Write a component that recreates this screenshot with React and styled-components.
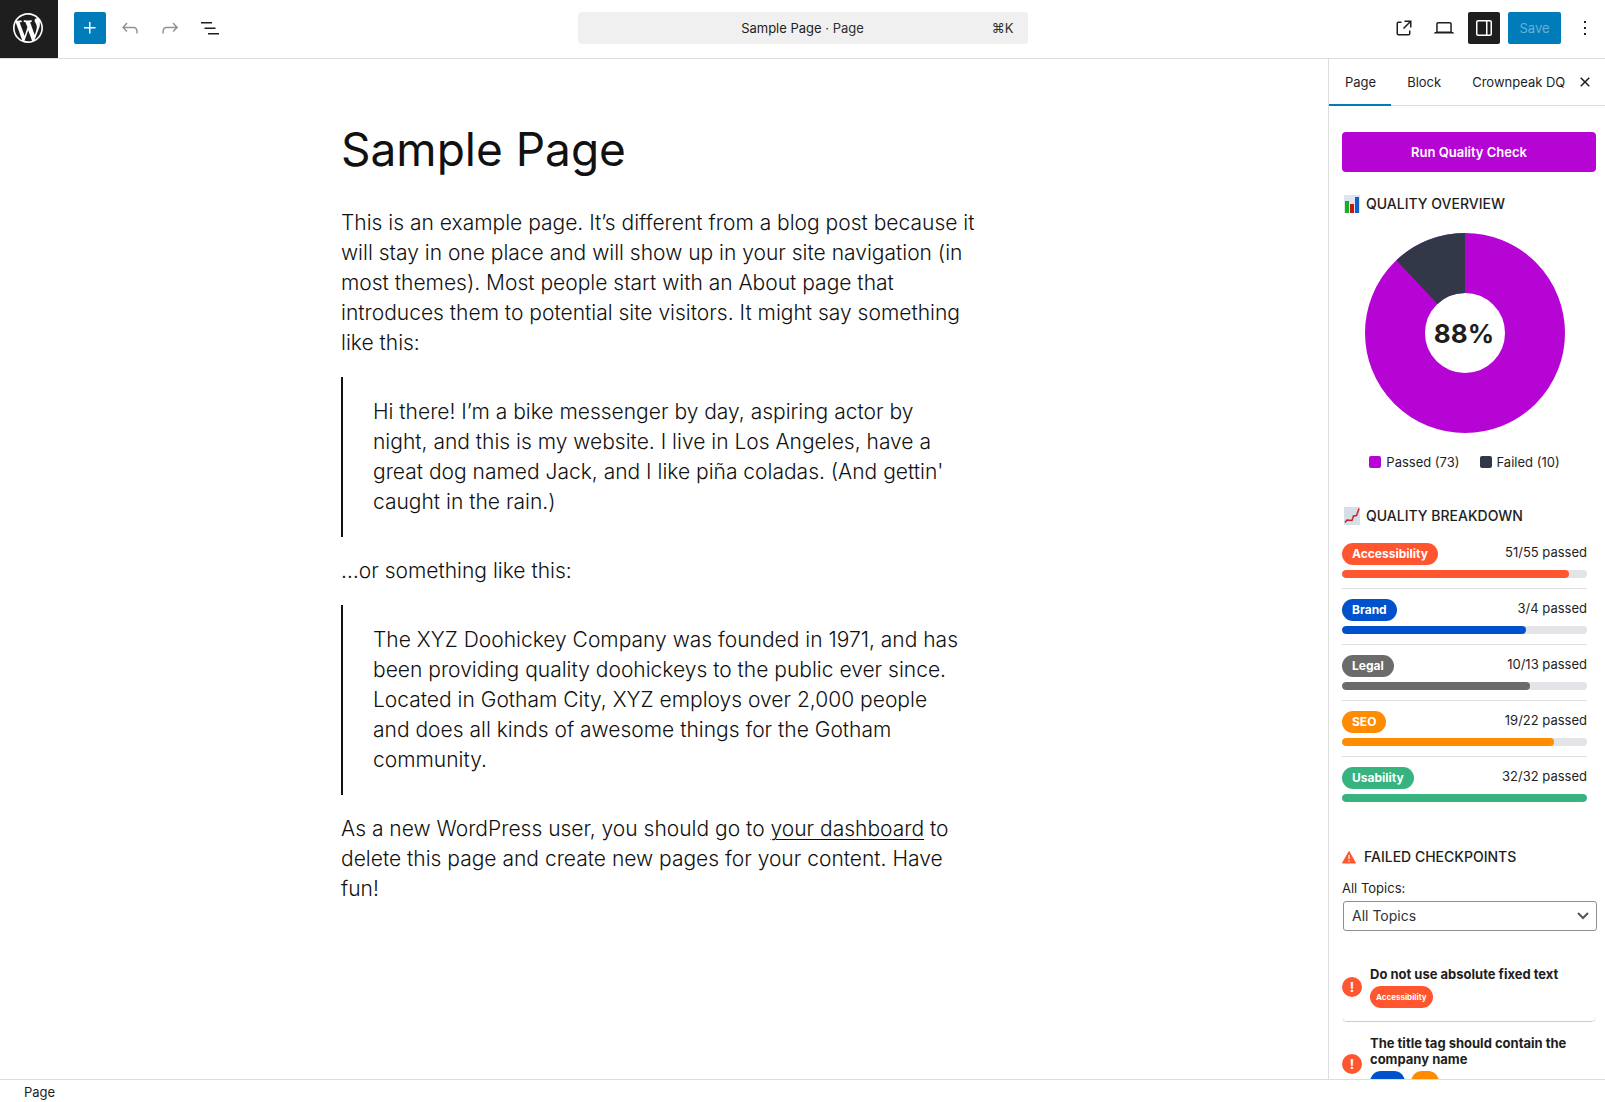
import React from "react";
import styled, { createGlobalStyle } from "styled-components";

const GlobalStyle = createGlobalStyle`
  *, *::before, *::after { box-sizing: border-box; }
  body {
    margin: 0;
    background: #fff;
    color: #1e1e1e;
    font-family: Inter, "Liberation Sans", sans-serif;
    font-size: 13px;
    line-height: 20px;
  }
  button, select { font: inherit; }
  h1, h2, h3, p, blockquote, ul { margin: 0; padding: 0; }
`;

const Shell = styled.div`
  display: flex;
  flex-direction: column;
  height: 100vh;
  overflow: hidden;
`;

const Header = styled.header`
  display: grid;
  grid-template-columns: 1fr minmax(0, 450px) 1fr;
  align-items: center;
  flex: none;
  padding-bottom: 2px;
  border-bottom: 1px solid #ddd;
`;

const HeaderStart = styled.div`
  display: flex;
  align-items: center;
  gap: 8px;
`;

const HeaderEnd = styled.div`
  display: flex;
  align-items: center;
  justify-content: flex-end;
  gap: 8px;
  padding-right: 4px;
`;

const HomeLink = styled.a`
  display: flex;
  align-items: center;
  width: 58px;
  height: 58px;
  margin: 0 8px -2px 0;
  padding: 0 0 2px 10px;
  background: #1e1e1e;
  color: #fff;
`;

const IconButton = styled.button`
  display: flex;
  align-items: center;
  justify-content: center;
  width: 32px;
  height: 32px;
  padding: 0;
  border: 0;
  border-radius: 2px;
  background: ${(p) => p.$bg || "transparent"};
  color: ${(p) => p.$fg || "#1e1e1e"};
`;

const SaveButton = styled.button`
  min-width: 53px;
  height: 32px;
  padding: 0 10px;
  border: 0;
  border-radius: 2px;
  background: #007cba;
  color: #66b0d6;
`;

const CommandBar = styled.button`
  display: grid;
  grid-template-columns: 1fr auto 1fr;
  align-items: center;
  height: 32px;
  padding: 0 14px;
  border: 0;
  border-radius: 4px;
  background: #f0f0f0;
  color: #1e1e1e;
`;

const CommandTitle = styled.span`
  grid-column: 2;
`;

const Shortcut = styled.span`
  justify-self: end;
  color: #2f2f2f;
`;

const Muted = styled.span`
  color: #2f2f2f;
`;

const Main = styled.div`
  display: flex;
  flex: 1;
  min-height: 0;
`;

const Canvas = styled.main`
  flex: 1;
  min-width: 0;
  overflow: hidden;
  padding: 62px 40px 0;
`;

const Article = styled.article`
  display: flex;
  flex-direction: column;
  gap: 19px;
  max-width: 646px;
  margin: 0 auto;
  color: #111;
  font-size: 21px;
  font-weight: 300;
  line-height: 30px;
`;

const Title = styled.h1`
  padding-bottom: 12px;
  font-size: 46px;
  font-weight: 400;
  line-height: 56px;
`;

const Quote = styled.blockquote`
  padding: 20px 20px 20px 30px;
  border-left: 2px solid #111;
`;

const InlineLink = styled.a`
  color: inherit;
  text-decoration: underline;
  text-decoration-thickness: 1px;
  text-underline-offset: 3px;
`;

const Sidebar = styled.aside`
  display: flex;
  flex-direction: column;
  flex: none;
  width: 277px;
  border-left: 1px solid #ddd;
  overflow: hidden;
`;

const TabBar = styled.div`
  display: flex;
  flex: none;
  height: 47px;
  border-bottom: 1px solid #ddd;
`;

const TabList = styled.div`
  display: flex;
  flex: 1;
  min-width: 0;
  margin-bottom: -1px;
  overflow: hidden;
`;

const Tab = styled.button`
  flex: none;
  padding: 0 15px 0 16px;
  border: 0;
  border-bottom: 2px solid ${(p) => (p.$active ? "#007cba" : "transparent")};
  background: none;
  color: #1e1e1e;
  white-space: nowrap;
`;

const CloseSlot = styled.div`
  display: flex;
  align-items: center;
  padding: 0 4px;
`;

const Panel = styled.div`
  flex: 1;
  min-height: 0;
  overflow: hidden;
  padding: 26px 9px 0 13px;
`;

const RunButton = styled.button`
  display: block;
  width: 100%;
  height: 40px;
  border: 0;
  border-radius: 4px;
  background: #b604d4;
  color: #fff;
  font-weight: 600;
`;

const SectionTitle = styled.h2`
  display: flex;
  align-items: center;
  gap: 6px;
  font-size: 14px;
  font-weight: 500;
  line-height: 20px;
  text-transform: uppercase;
`;

const Overview = styled.section`
  padding: 22px 9px 0 0;
`;

const Chart = styled.div`
  display: flex;
  justify-content: center;
  padding-top: 19px;
`;

const ChartLabel = styled.text`
  fill: #1e1e1e;
  font-size: 26px;
  font-weight: 700;
  text-anchor: middle;
`;

const Legend = styled.ul`
  display: flex;
  justify-content: center;
  gap: 20px;
  padding-top: 19px;
  list-style: none;
`;

const LegendItem = styled.li`
  display: flex;
  align-items: center;
  gap: 5px;
`;

const Swatch = styled.span`
  width: 12px;
  height: 12px;
  border-radius: 2px;
  background: ${(p) => p.$color};
`;

const Breakdown = styled.section`
  padding: 34px 9px 0 0;
`;

const TopicList = styled.ul`
  padding-top: 17px;
  list-style: none;
`;

const TopicRow = styled.li`
  & + & {
    margin-top: 10px;
    padding-top: 10px;
    border-top: 1px solid #e0e0e0;
  }
`;

const TopicHead = styled.div`
  display: flex;
  justify-content: space-between;
  height: 22px;
  margin-bottom: 5px;
  line-height: 18px;
`;

const Pill = styled.span`
  flex: none;
  padding: 0 ${(p) => (p.$small ? 6 : 10)}px;
  border-radius: 11px;
  background: ${(p) => p.$color};
  color: #fff;
  font-size: ${(p) => (p.$small ? 8 : 12)}px;
  font-weight: 700;
  line-height: 22px;
`;

const Track = styled.div`
  height: 8px;
  border-radius: 4px;
  background: #e2e4e7;
  overflow: hidden;
`;

const Fill = styled.div`
  height: 100%;
  border-radius: 4px;
  background: ${(p) => p.$color};
`;

const Failed = styled.section`
  padding-top: 45px;
`;

const FilterLabel = styled.label`
  display: block;
  padding: 11px 0 3px;
`;

const SelectWrap = styled.div`
  display: grid;
  align-items: center;
  margin: 0 -1px 0 1px;
  & > * { grid-area: 1 / 1; }
  & > svg { justify-self: end; margin-right: 8px; pointer-events: none; }
`;

const Select = styled.select`
  appearance: none;
  width: 100%;
  height: 30px;
  padding: 0 24px 0 8px;
  border: 1px solid #8c8f94;
  border-radius: 3px;
  background: #fff;
  color: #2c3338;
  font-size: 14px;
`;

const Checkpoints = styled.ul`
  display: flex;
  flex-direction: column;
  gap: 13px;
  padding-top: 35px;
  list-style: none;
`;

const Checkpoint = styled.li`
  display: flex;
  align-items: center;
  gap: 8px;
  padding: 0 8px 13px 0;
  border-bottom: 1px solid #ccc;
  border-radius: 5px;
`;

const Alert = styled.span`
  flex: none;
  width: 20px;
  height: 20px;
  border-radius: 50%;
  background: #ff5630;
  color: #fff;
  font-weight: 700;
  line-height: 20px;
  text-align: center;
`;

const CheckTitle = styled.h3`
  font-size: 13px;
  font-weight: 700;
  line-height: 16px;
`;

const PillRow = styled.div`
  display: flex;
  gap: 6px;
  padding-top: 4px;
`;

const Footer = styled.footer`
  flex: none;
  height: 23px;
  padding: 2px 24px 0;
  border-top: 1px solid #ddd;
  line-height: 20px;
`;

const ICONS = {
  plus: "M11 12.5V17.5H12.5V12.5H17.5V11H12.5V6H11V11H6V12.5H11Z",
  undo: "M18.3 11.7c-.6-.6-1.4-.9-2.3-.9H6.7l2.9-3.3-1.1-1-4.5 5L8.5 16l1-1-2.7-2.7H16c.5 0 .9.2 1.3.5 1 1 1 3.4 1 4.5v.3h1.5v-.2c0-1.5 0-4.3-1.5-5.7z",
  redo: "M15.6 6.5l-1.1 1 2.9 3.3H8c-.9 0-1.7.3-2.3.9-1.4 1.5-1.4 4.2-1.4 5.6v.2h1.5v-.3c0-1.1 0-3.5 1-4.5.3-.3.7-.5 1.3-.5h9.2L14.5 15l1.1 1.1 4.6-4.6-4.6-5z",
  list: "M3 6h11v1.5H3V6Zm3.5 5.5h11V13h-11v-1.5ZM21 17H10v1.5h11V17Z",
  external: "M19.5 4.5h-7V6h4.44l-5.97 5.97 1.06 1.06L18 7.06v4.44h1.5v-7Zm-13 1a2 2 0 0 0-2 2v10a2 2 0 0 0 2 2h10a2 2 0 0 0 2-2v-3H17v3a.5.5 0 0 1-.5.5h-10a.5.5 0 0 1-.5-.5v-10a.5.5 0 0 1 .5-.5h3V5.5h-3Z",
  desktop: "M20.5 16h-.7V8c0-1.1-.9-2-2-2H6.2c-1.1 0-2 .9-2 2v8h-.7c-.8 0-1.5.7-1.5 1.5h20c0-.8-.7-1.5-1.5-1.5zM5.7 8c0-.3.2-.5.5-.5h11.6c.3 0 .5.2.5.5v7.6H5.7V8z",
  drawer: "M18 4H6c-1.1 0-2 .9-2 2v12c0 1.1.9 2 2 2h12c1.1 0 2-.9 2-2V6c0-1.1-.9-2-2-2zm-4 14.5H6c-.3 0-.5-.2-.5-.5V6c0-.3.2-.5.5-.5h8v13zm4.5-.5c0 .3-.2.5-.5.5h-2.5v-13H18c.3 0 .5.2.5.5v12z",
  more: "M13 19h-2v-2h2v2zm0-6h-2v-2h2v2zm0-6h-2V5h2v2z",
  close: "M12 13.06l3.712 3.713 1.061-1.06L13.061 12l3.712-3.712-1.06-1.06L12 10.938 8.288 7.227l-1.061 1.06L10.939 12l-3.712 3.712 1.06 1.061L12 13.061z",
};

const Icon = ({ name }) => (
  <svg width="24" height="24" viewBox="0 0 24 24" fill="currentColor" aria-hidden="true">
    <path d={ICONS[name]} />
  </svg>
);

const WordPressLogo = () => (
  <svg width="36" height="36" viewBox="-2 -2 24 24" fill="currentColor" aria-hidden="true">
    <path d="M20 10c0-5.51-4.49-10-10-10C4.48 0 0 4.49 0 10c0 5.52 4.48 10 10 10 5.51 0 10-4.48 10-10zM7.78 15.37L4.37 6.22c.55-.02 1.17-.08 1.17-.08.5-.06.44-1.13-.06-1.11 0 0-1.45.11-2.37.11-.18 0-.37 0-.58-.01C4.12 2.69 6.87 1.11 10 1.11c2.33 0 4.45.87 6.05 2.34-.68-.11-1.65.39-1.65 1.58 0 .74.45 1.36.9 2.1.35.61.55 1.36.55 2.46 0 1.49-1.4 5-1.4 5l-3.03-8.37c.54-.02.82-.17.82-.17.5-.05.44-1.25-.06-1.22 0 0-1.44.12-2.38.12-.87 0-2.33-.12-2.33-.12-.5-.03-.56 1.2-.06 1.22l.92.08 1.26 3.41zM17.41 10c.24-.64.74-1.87.43-4.25.7 1.29 1.05 2.71 1.05 4.25 0 3.29-1.73 6.24-4.4 7.78.97-2.59 1.94-5.2 2.92-7.78zM6.1 18.09C3.12 16.65 1.11 13.53 1.11 10c0-1.3.23-2.48.72-3.59C3.25 10.3 4.67 14.2 6.1 18.09zm4.03-6.63l2.58 6.98c-.86.29-1.76.45-2.71.45-.79 0-1.57-.11-2.29-.33.81-2.38 1.62-4.74 2.42-7.1z" />
  </svg>
);

const BarChartIcon = () => (
  <svg width="18" height="20" viewBox="0 0 18 20" aria-hidden="true">
    <rect x="2" y="1" width="16" height="18" fill="#dde6f0" />
    <rect x="3" y="7" width="4" height="12" fill="#12b31c" />
    <rect x="8" y="10" width="4" height="9" fill="#c01818" />
    <rect x="13" y="3" width="4" height="16" fill="#1560c4" />
  </svg>
);

const TrendIcon = () => (
  <svg width="18" height="20" viewBox="0 0 18 20" aria-hidden="true">
    <rect x="2" y="1" width="16" height="18" fill="#d8e0e8" />
    <path d="M2 6h16M2 10h16M2 14h16M6 1v18M10 1v18M14 1v18" stroke="#ccd6e0" strokeWidth="0.5" />
    <path d="M3 16.500l2-2.500 5 .500 1.500-4.500 3-.500 2.500-7" fill="none" stroke="#c8242c" strokeWidth="1.500" />
  </svg>
);

const WarningIcon = () => (
  <svg width="16" height="14" viewBox="0 0 16 14" aria-hidden="true">
    <path d="M7 1.500L13.500 13H.5z" fill="#ff5630" stroke="#ff5630" strokeLinejoin="round" />
    <path d="M7 5v4M7 10.500v1.300" stroke="#fff" strokeWidth="1.300" />
  </svg>
);

const PASSED = 73;
const FAILED = 10;

const DonutChart = () => {
  const angle = (PASSED / (PASSED + FAILED)) * 2 * Math.PI;
  const at = (r) => `${100 + r * Math.sin(angle)} ${100 - r * Math.cos(angle)}`;
  return (
    <svg width="200" height="200" viewBox="0 0 200 200" role="img" aria-label="Quality overview">
      <circle cx="100" cy="100" r="70" fill="none" stroke="#b604d4" strokeWidth="60" />
      <path d={`M${at(100)}A100 100 0 0 1 100 0V60A40 40 0 0 0 ${at(40)}Z`} fill="#323848" />
      <ChartLabel x="99" y="110">88%</ChartLabel>
    </svg>
  );
};

const COLORS = {
  Accessibility: "#ff5630",
  Brand: "#0052cc",
  Legal: "#6b6b6b",
  SEO: "#ff8b00",
  Usability: "#36b37e",
};

const TOPICS = [
  { name: "Accessibility", passed: 51, total: 55 },
  { name: "Brand", passed: 3, total: 4 },
  { name: "Legal", passed: 10, total: 13 },
  { name: "SEO", passed: 19, total: 22 },
  { name: "Usability", passed: 32, total: 32 },
];

const FAILURES = [
  { title: "Do not use absolute fixed text", topics: ["Accessibility"] },
  { title: "The title tag should contain the company name", topics: ["Brand", "SEO"] },
];

export default function App() {
  return (
    <Shell>
      <GlobalStyle />
      <Header>
        <HeaderStart>
          <HomeLink href="#" aria-label="View Pages"><WordPressLogo /></HomeLink>
          <IconButton $bg="#007cba" $fg="#fff" aria-label="Block Inserter"><Icon name="plus" /></IconButton>
          <IconButton $fg="#949494" aria-label="Undo"><Icon name="undo" /></IconButton>
          <IconButton $fg="#949494" aria-label="Redo"><Icon name="redo" /></IconButton>
          <IconButton aria-label="Document Overview"><Icon name="list" /></IconButton>
        </HeaderStart>
        <CommandBar>
          <CommandTitle>Sample Page <Muted>· Page</Muted></CommandTitle>
          <Shortcut>⌘K</Shortcut>
        </CommandBar>
        <HeaderEnd>
          <IconButton aria-label="View Page"><Icon name="external" /></IconButton>
          <IconButton aria-label="View"><Icon name="desktop" /></IconButton>
          <IconButton $bg="#1e1e1e" $fg="#fff" aria-label="Settings"><Icon name="drawer" /></IconButton>
          <SaveButton>Save</SaveButton>
          <IconButton aria-label="Options"><Icon name="more" /></IconButton>
        </HeaderEnd>
      </Header>

      <Main>
        <Canvas>
          <Article>
            <Title>Sample Page</Title>
            <p>
              This is an example page. It’s different from a blog post because it will stay in one
              place and will show up in your site navigation (in most themes). Most people start
              with an About page that introduces them to potential site visitors. It might say
              something like this:
            </p>
            <Quote>
              <p>
                Hi there! I’m a bike messenger by day, aspiring actor by night, and this is my
                website. I live in Los Angeles, have a great dog named Jack, and I like piña
                coladas. (And gettin' caught in the rain.)
              </p>
            </Quote>
            <p>…or something like this:</p>
            <Quote>
              <p>
                The XYZ Doohickey Company was founded in 1971, and has been providing quality
                doohickeys to the public ever since. Located in Gotham City, XYZ employs over 2,000
                people<br />
                and does all kinds of awesome things for the Gotham community.
              </p>
            </Quote>
            <p>
              As a new WordPress user, you should go to <InlineLink href="#">your dashboard</InlineLink>{" "}
              to delete this page and create new pages for your content. Have<br />
              fun!
            </p>
          </Article>
        </Canvas>

        <Sidebar>
          <TabBar>
            <TabList role="tablist">
              <Tab role="tab" $active aria-selected="true">Page</Tab>
              <Tab role="tab" aria-selected="false">Block</Tab>
              <Tab role="tab" aria-selected="false">Crownpeak DQM</Tab>
            </TabList>
            <CloseSlot>
              <IconButton aria-label="Close Settings"><Icon name="close" /></IconButton>
            </CloseSlot>
          </TabBar>
          <Panel>
            <RunButton>Run Quality Check</RunButton>

            <Overview>
              <SectionTitle><BarChartIcon />Quality Overview</SectionTitle>
              <Chart><DonutChart /></Chart>
              <Legend>
                <LegendItem><Swatch $color="#b604d4" />Passed ({PASSED})</LegendItem>
                <LegendItem><Swatch $color="#323848" />Failed ({FAILED})</LegendItem>
              </Legend>
            </Overview>

            <Breakdown>
              <SectionTitle><TrendIcon />Quality Breakdown</SectionTitle>
              <TopicList>
                {TOPICS.map((t) => (
                  <TopicRow key={t.name}>
                    <TopicHead>
                      <Pill $color={COLORS[t.name]}>{t.name}</Pill>
                      <span>{t.passed}/{t.total} passed</span>
                    </TopicHead>
                    <Track>
                      <Fill $color={COLORS[t.name]} style={{ width: `${(t.passed / t.total) * 100}%` }} />
                    </Track>
                  </TopicRow>
                ))}
              </TopicList>
            </Breakdown>

            <Failed>
              <SectionTitle><WarningIcon />Failed Checkpoints</SectionTitle>
              <FilterLabel htmlFor="topic-filter">All Topics:</FilterLabel>
              <SelectWrap>
                <Select id="topic-filter" defaultValue="all">
                  <option value="all">All Topics</option>
                  {TOPICS.map((t) => <option key={t.name} value={t.name}>{t.name}</option>)}
                </Select>
                <svg width="12" height="8" viewBox="0 0 12 8" fill="none" stroke="#50575e" strokeWidth="2" aria-hidden="true">
                  <path d="M1 1l5 5 5-5" />
                </svg>
              </SelectWrap>
              <Checkpoints>
                {FAILURES.map((f) => (
                  <Checkpoint key={f.title}>
                    <Alert>!</Alert>
                    <div>
                      <CheckTitle>{f.title}</CheckTitle>
                      <PillRow>
                        {f.topics.map((t) => <Pill key={t} $small $color={COLORS[t]}>{t}</Pill>)}
                      </PillRow>
                    </div>
                  </Checkpoint>
                ))}
              </Checkpoints>
            </Failed>
          </Panel>
        </Sidebar>
      </Main>

      <Footer>Page</Footer>
    </Shell>
  );
}
